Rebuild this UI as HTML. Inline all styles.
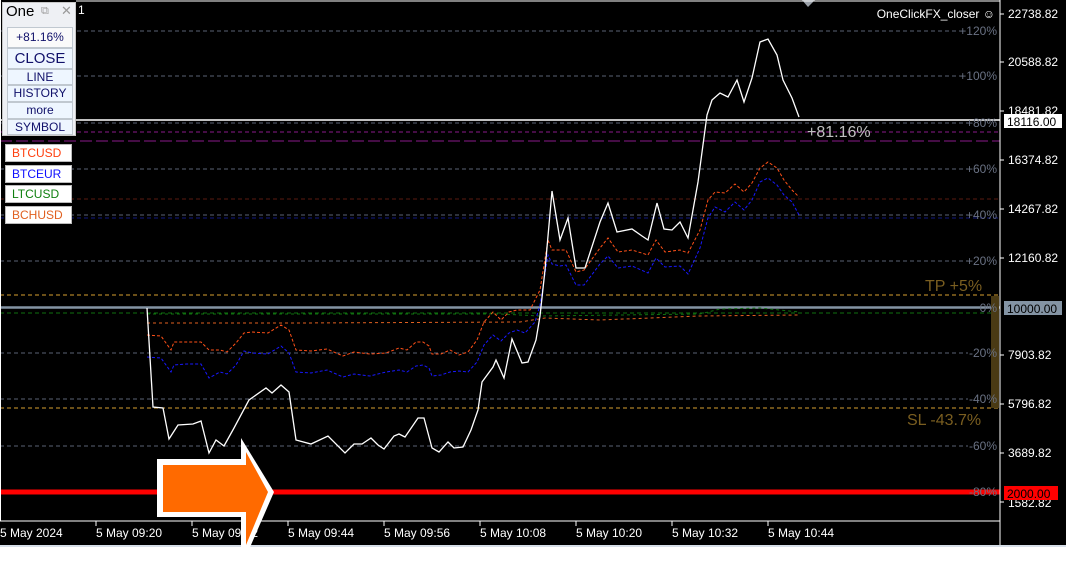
<!DOCTYPE html>
<html><head><meta charset="utf-8"><style>
body{margin:0;width:1066px;height:568px;overflow:hidden;background:#fff;font-family:"Liberation Sans",sans-serif;}
#c{position:absolute;left:0;top:0;width:1066px;height:546px;background:#000;}
svg{position:absolute;left:0;top:0}
.pn{position:absolute;left:2px;top:2px;width:74px;height:134px;background:#eef0f4;border:1px solid #c8c8c8;box-sizing:border-box}
.b{position:absolute;left:4px;width:66px;background:#eef6ff;border:1px solid #c0c8d0;box-sizing:border-box;text-align:center;color:#10106a;font-size:12px;line-height:15px}
.lg{position:absolute;left:5px;width:67px;height:18px;background:#fff;border:1px solid #bbb;box-sizing:border-box;font-size:12px;line-height:16px;padding-left:6px}
</style></head><body>
<div id="c"></div>
<svg width="1066" height="568" font-family="Liberation Sans, sans-serif">
<g stroke="#5a6274" stroke-dasharray="4,3" stroke-width="1">
<line x1="0" x2="960" y1="31" y2="31"/><line x1="0" x2="960" y1="76" y2="76"/><line x1="0" x2="968" y1="123" y2="123"/>
<line x1="0" x2="968" y1="169" y2="169"/><line x1="0" x2="968" y1="215" y2="215"/><line x1="0" x2="968" y1="261" y2="261"/>
<line x1="0" x2="968" y1="353" y2="353"/><line x1="0" x2="968" y1="399" y2="399"/><line x1="0" x2="968" y1="446" y2="446"/>
</g>
<line x1="0" x2="1000" y1="132" y2="132" stroke="#8a1a8a" stroke-dasharray="4,3"/>
<line x1="0" x2="1000" y1="141" y2="141" stroke="#8a1a8a" stroke-dasharray="12,4"/>
<line x1="0" x2="1000" y1="199" y2="199" stroke="#5a1a10" stroke-dasharray="4,3"/>
<line x1="0" x2="1000" y1="218" y2="218" stroke="#101880" stroke-dasharray="4,3"/>
<line x1="0" x2="1000" y1="295" y2="295" stroke="#d8a030" stroke-dasharray="4,3"/>
<line x1="0" x2="1000" y1="408" y2="408" stroke="#d8a030" stroke-dasharray="4,3"/>
<line x1="0" x2="1000" y1="313" y2="313" stroke="#107010" stroke-dasharray="4,3"/>
<line x1="0" x2="1000" y1="120" y2="120" stroke="#fff" stroke-width="1.5"/>
<line x1="0" x2="1000" y1="307.5" y2="307.5" stroke="#8494a4" stroke-width="2.5"/>
<rect x="991" y="296" width="8" height="112" fill="#4a3a14"/>
<polyline fill="none" stroke="#107010" stroke-dasharray="3,3" points="147,314 500,314 540,316 700,314 720,309 760,308 799,312"/>
<polyline fill="none" stroke="#e06020" stroke-dasharray="3,3" points="147,323 300,323 520,322 545,318 600,320 700,316 799,315"/>
<polyline fill="none" stroke="#1818ff" stroke-dasharray="3,2" points="147,357 161,358 166,365 171,372 174,365 187,364 201,364 209,378 220,372 227,374 236,365 244,351 252,353 268,354 281,346 289,353 296,372 311,373 327,370 343,377 354,374 370,376 386,372 399,370 407,372 416,366 423,365 429,368 432,376 441,375 450,372 459,371 468,372 477,362 484,345 493,335 501,341 509,333 517,330 525,333 535,322 540,305 548,255 552,264 560,266 566,265 576,285 584,285 600,264 608,256 618,268 632,266 648,273 656,258 665,267 680,266 688,274 700,248 708,218 715,207 725,212 735,202 744,210 752,200 760,182 768,178 777,185 784,195 792,202 799,215"/>
<polyline fill="none" stroke="#ff5018" stroke-dasharray="3,2" points="147,335 161,336 166,343 171,350 174,342 187,342 201,342 209,350 220,350 227,352 236,343 244,333 252,332 268,333 281,325 289,330 296,350 311,351 327,349 343,356 354,352 370,354 386,353 399,348 407,350 416,342 423,342 429,346 432,354 441,354 450,350 459,355 468,352 477,340 484,322 493,312 501,320 509,312 517,310 530,310 540,290 548,240 552,250 560,250 566,250 576,272 584,270 600,248 608,238 618,252 632,250 648,255 656,240 665,252 680,250 688,253 700,230 708,200 715,192 725,193 735,184 744,192 752,183 760,168 768,162 777,168 784,180 792,190 799,197"/>
<polyline fill="none" stroke="#fff" stroke-width="1.3" points="147,308 153,407 163,408 169,439 178,425 193,424 201,421 209,453 216,440 224,446 234,428 249,400 266,388 272,393 281,385 289,392 296,440 311,444 328,436 345,453 354,444 362,444 371,438 378,445 384,449 394,436 399,434 405,437 418,418 424,418 432,448 439,452 448,442 454,448 463,447 471,430 478,410 482,382 493,367 496,360 504,378 512,339 522,363 528,362 536,340 540,316 545,270 552,191 560,240 568,218 576,268 585,268 600,222 608,203 617,232 632,229 642,236 648,240 657,203 664,229 672,230 680,222 688,238 698,182 707,115 712,100 720,93 728,97 737,80 744,102 752,78 760,42 768,39 777,55 783,80 792,98 799,117"/>
<rect x="0" y="489.5" width="1000" height="5" fill="#ff0000"/>
<g fill="#6a7284" font-size="12" text-anchor="end">
<text x="997" y="35">+120%</text><text x="997" y="80">+100%</text><text x="997" y="127">+80%</text><text x="997" y="173">+60%</text>
<text x="997" y="219">+40%</text><text x="997" y="265">+20%</text><text x="997" y="312">0%</text><text x="997" y="357">-20%</text>
<text x="997" y="403">-40%</text><text x="997" y="450">-60%</text><text x="997" y="496">-80%</text></g>
<text x="925" y="291" fill="#7a5e20" font-size="16">TP +5%</text>
<text x="907" y="425" fill="#7a5e20" font-size="16">SL -43.7%</text>
<text x="807" y="137" fill="#c0c0c0" font-size="16">+81.16%</text>
<text x="995" y="18" fill="#fff" font-size="12" text-anchor="end">OneClickFX_closer ☺</text>
<polygon points="802,0 815,0 808,7" fill="#9aa0a8"/>
<text x="78" y="14" fill="#fff" font-size="12">1</text>
<line x1="1000" x2="1000" y1="0" y2="546" stroke="#fff"/>
<line x1="0" x2="1000" y1="521" y2="521" stroke="#fff"/>
<line x1="0.5" x2="0.5" y1="0" y2="521" stroke="#fff"/>
<line x1="76" x2="1000" y1="1" y2="1" stroke="#fff"/>
<g stroke="#fff"><line x1="1000" x2="1004" y1="14" y2="14"/><line x1="1000" x2="1004" y1="62" y2="62"/><line x1="1000" x2="1004" y1="111" y2="111"/><line x1="1000" x2="1004" y1="160" y2="160"/><line x1="1000" x2="1004" y1="209" y2="209"/><line x1="1000" x2="1004" y1="258" y2="258"/><line x1="1000" x2="1004" y1="355" y2="355"/><line x1="1000" x2="1004" y1="404" y2="404"/><line x1="1000" x2="1004" y1="453" y2="453"/><line x1="1000" x2="1004" y1="502" y2="502"/>
<line x1="96" x2="96" y1="521" y2="526"/><line x1="192" x2="192" y1="521" y2="526"/><line x1="288" x2="288" y1="521" y2="526"/><line x1="384" x2="384" y1="521" y2="526"/><line x1="480" x2="480" y1="521" y2="526"/><line x1="576" x2="576" y1="521" y2="526"/><line x1="672" x2="672" y1="521" y2="526"/><line x1="768" x2="768" y1="521" y2="526"/></g>
<g fill="#fff" font-size="12"><text x="1008" y="18">22738.82</text><text x="1008" y="66">20588.82</text><text x="1008" y="115">18481.82</text><text x="1008" y="164">16374.82</text><text x="1008" y="213">14267.82</text><text x="1008" y="262">12160.82</text><text x="1008" y="359">7903.82</text><text x="1008" y="408">5796.82</text><text x="1008" y="457">3689.82</text><text x="1008" y="507">1582.82</text>
<text x="0" y="537">5 May 2024</text><text x="96" y="537">5 May 09:20</text><text x="192" y="537">5 May 09:32</text><text x="288" y="537">5 May 09:44</text><text x="384" y="537">5 May 09:56</text><text x="480" y="537">5 May 10:08</text><text x="576" y="537">5 May 10:20</text><text x="672" y="537">5 May 10:32</text><text x="768" y="537">5 May 10:44</text></g>
<rect x="1004" y="114" width="58" height="14" fill="#fff"/><text x="1007" y="126" font-size="12" fill="#000">18116.00</text>
<rect x="1004" y="301" width="58" height="14" fill="#8494a4"/><text x="1007" y="313" font-size="12" fill="#000">10000.00</text>
<rect x="1004" y="486" width="54" height="14" fill="#ff0000"/><text x="1007" y="498" font-size="12" fill="#000">2000.00</text>
<rect x="0" y="545" width="1066" height="23" fill="#fff"/><line x1="0" x2="1066" y1="546" y2="546" stroke="#c8d4e0" stroke-width="1.5"/>
<polygon points="157,459 241,459 241,438 274,492 241,568 241,517 157,517" fill="#fff"/>
<polygon points="163,465 246,465 246,452 268,492 246,545 246,512 163,512" fill="#ff6a00"/>
</svg>
<div class="pn">
<div style="position:absolute;left:3px;top:0;font-size:15px;color:#000">One</div>
<div style="position:absolute;left:38px;top:2px;font-size:11px;color:#999">⧉</div>
<div style="position:absolute;left:58px;top:0px;font-size:13px;color:#999">✕</div>
<div class="b" style="top:24px;height:21px;line-height:19px;background:#fafafa">+81.16%</div>
<div class="b" style="top:45px;height:21px;font-size:15px;line-height:19px">CLOSE</div>
<div class="b" style="top:66px;height:16px">LINE</div>
<div class="b" style="top:82px;height:17px">HISTORY</div>
<div class="b" style="top:99px;height:17px">more</div>
<div class="b" style="top:116px;height:16px">SYMBOL</div>
</div>
<div class="lg" style="top:144px;color:#ff4010">BTCUSD</div>
<div class="lg" style="top:165px;color:#1010ff">BTCEUR</div>
<div class="lg" style="top:185px;color:#108010">LTCUSD</div>
<div class="lg" style="top:206px;color:#e06020">BCHUSD</div>
</body></html>
